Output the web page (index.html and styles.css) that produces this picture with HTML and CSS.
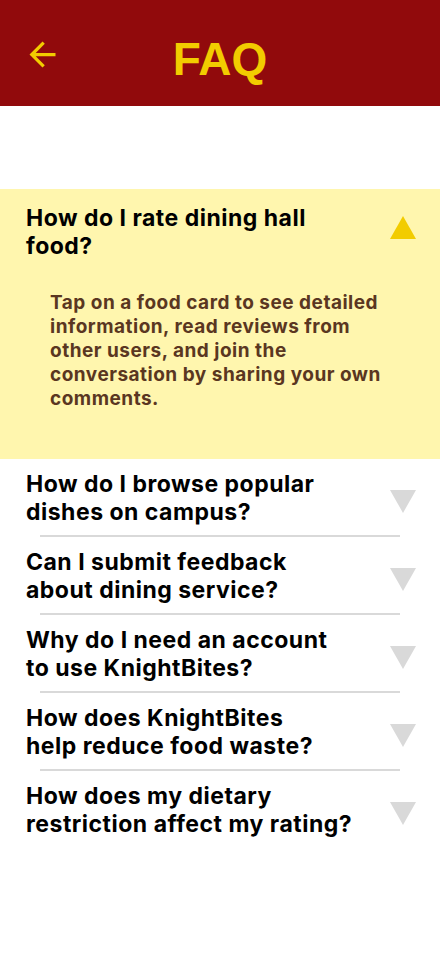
FILE: index.html
```html
<!DOCTYPE html>
<html lang="en">
<head>
<meta charset="utf-8">
<title>FAQ</title>
<link rel="stylesheet" href="styles.css">
</head>
<body>
<header class="topbar">
  <button class="back" aria-label="Back">
    <svg width="39" height="39" viewBox="0 0 24 24"><path fill="#F2CC00" d="M20 11H7.83l5.59-5.59L12 4l-8 8 8 8 1.41-1.41L7.83 13H20v-2z"/></svg>
  </button>
  <h1 class="title">FAQ</h1>
  <span></span>
</header>

<main class="faq">
  <section class="item open">
    <div class="row">
      <h2 class="q">How do I rate dining hall<br>food?</h2>
      <svg class="tri up" width="26" height="23" viewBox="0 0 26 23"><polygon points="13,0 26,23 0,23" fill="#F2CC00"/></svg>
    </div>
    <p class="answer">Tap on a food card to see detailed<br>information, read reviews from<br>other users, and join the<br>conversation by sharing your own<br>comments.</p>
  </section>

  <section class="item">
    <div class="row">
      <h2 class="q">How do I browse popular<br>dishes on campus?</h2>
      <svg class="tri down" width="26" height="23" viewBox="0 0 26 23"><polygon points="0,0 26,0 13,23" fill="#D9D9D9"/></svg>
    </div>
  </section>

  <section class="item">
    <div class="row">
      <h2 class="q">Can I submit feedback<br>about dining service?</h2>
      <svg class="tri down" width="26" height="23" viewBox="0 0 26 23"><polygon points="0,0 26,0 13,23" fill="#D9D9D9"/></svg>
    </div>
  </section>

  <section class="item">
    <div class="row">
      <h2 class="q">Why do I need an account<br>to use KnightBites?</h2>
      <svg class="tri down" width="26" height="23" viewBox="0 0 26 23"><polygon points="0,0 26,0 13,23" fill="#D9D9D9"/></svg>
    </div>
  </section>

  <section class="item">
    <div class="row">
      <h2 class="q">How does KnightBites<br>help reduce food waste?</h2>
      <svg class="tri down" width="26" height="23" viewBox="0 0 26 23"><polygon points="0,0 26,0 13,23" fill="#D9D9D9"/></svg>
    </div>
  </section>

  <section class="item last">
    <div class="row">
      <h2 class="q">How does my dietary<br>restriction affect my rating?</h2>
      <svg class="tri down" width="26" height="23" viewBox="0 0 26 23"><polygon points="0,0 26,0 13,23" fill="#D9D9D9"/></svg>
    </div>
  </section>
</main>
</body>
</html>
```

FILE: styles.css
```css
* { box-sizing: border-box; }

html, body {
  margin: 0;
  padding: 0;
  background: #ffffff;
}

body {
  width: 440px;
  min-height: 956px;
  font-family: Inter, "Noto Sans", sans-serif;
  color: #000;
}

.topbar {
  height: 106px;
  background: #910A0C;
  display: grid;
  grid-template-columns: 1fr auto 1fr;
  align-items: start;
  padding: 35px 0 0 23px;
}

.back {
  justify-self: start;
  width: 39px;
  height: 39px;
  padding: 0;
  margin: 0;
  border: 0;
  background: none;
  display: block;
}

.back svg { display: block; }

.title {
  margin: -2px 0 0 -23px;
  font-family: "Liberation Sans", Arial, sans-serif;
  font-weight: 700;
  font-size: 46px;
  line-height: 52px;
  color: #F2CC00;
}

.faq {
  margin-top: 83px;
}

.item {
  padding: 11px 24px 0 26px;
}

.item::after {
  content: "";
  display: block;
  height: 2px;
  margin: 9px 16px 0 14px;
  background: #D9D9D9;
}

.item.last::after,
.item.open::after {
  display: none;
}

.item.open {
  background: #FFF6AE;
  padding-top: 15px;
  padding-bottom: 48px;
  height: 270px;
}

.row {
  display: flex;
  justify-content: space-between;
  align-items: flex-start;
}

.q {
  margin: 0;
  font-size: 23px;
  line-height: 28px;
  font-weight: 700;
  letter-spacing: 0.5px;
  color: #000;
}

.tri { display: block; flex: none; }
.tri.up { margin-top: 12px; }
.tri.down { margin-top: 20px; }

.answer {
  margin: 31px 0 0 24px;
  font-size: 19px;
  line-height: 24px;
  font-weight: 700;
  letter-spacing: 0.5px;
  color: #5A3621;
}
```
